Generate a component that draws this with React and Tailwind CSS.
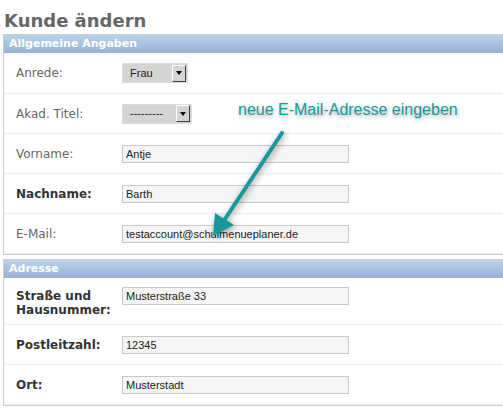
import React from 'react'

function Select({ value, width }) {
  return (
    <div
      className={`flex items-center justify-between h-[20px] bg-[#d4d4d4] border border-[#dcdcdc] pl-[7px] pr-px font-['Liberation_Sans',Arial,sans-serif] text-[11px] text-[#222] ${width}`}
    >
      <span>{value}</span>
      <span className="flex items-center justify-center w-[14px] h-[17px] bg-[#d4d4d4] border-t border-l border-t-white border-l-white border-r border-b border-r-[#404040] border-b-[#404040]">
        <svg width="6" height="4" viewBox="0 0 6 4">
          <path d="M0 0h6L3 4z" fill="#000" />
        </svg>
      </span>
    </div>
  )
}

function Input({ value }) {
  return (
    <div className="w-[227px] h-[18px] bg-[#f5f5f5] border border-[#c8c8c8] pl-[3px] font-['Liberation_Sans',Arial,sans-serif] text-[11px] leading-[16px] text-[#222]">
      {value}
    </div>
  )
}

function Row({ label, bold, h = 'h-[40px]', children }) {
  return (
    <div className={`flex items-center ${h} border-b border-[#eee] pl-[12px]`}>
      <label
        className={`w-[106px] text-[12px] ${bold ? 'font-bold text-[#333]' : 'text-[#666]'}`}
      >
        {label}
      </label>
      {children}
    </div>
  )
}

function Header({ children }) {
  return (
    <div className="h-[18px] bg-linear-to-b from-[#bdd2e8] to-[#93b3d6] pl-[5px] text-[11px] leading-[18px] font-bold text-white">
      {children}
    </div>
  )
}

export default function App() {
  return (
    <div className="relative w-[503px] h-[409px] overflow-hidden bg-white font-['DejaVu_Sans',Verdana,sans-serif]">
      <h1 className="h-[34px] pl-[4px] pt-[10px] text-[18px] leading-[21px] font-bold text-[#666]">
        Kunde ändern
      </h1>

      <div className="ml-[3px] w-[540px] border border-[#ccc]">
        <Header>Allgemeine Angaben</Header>
        <Row label="Anrede:" h="h-[41px]">
          <Select value="Frau" width="w-[66px]" />
        </Row>
        <Row label="Akad. Titel:">
          <Select value="---------" width="w-[70px]" />
        </Row>
        <Row label="Vorname:">
          <Input value="Antje" />
        </Row>
        <Row label="Nachname:" bold>
          <Input value="Barth" />
        </Row>
        <Row label="E-Mail:">
          <Input value="testaccount@schulmenueplaner.de" />
        </Row>
      </div>

      <div className="mt-[4px] ml-[3px] w-[540px] border border-[#ccc]">
        <Header>Adresse</Header>
        <div className="flex items-start h-[47px] border-b border-[#eee] pl-[12px] pt-[9px]">
          <label className="w-[106px] mt-[2px] text-[12px] leading-[14px] font-bold text-[#333]">
            Straße und Hausnummer:
          </label>
          <Input value="Musterstraße 33" />
        </div>
        <Row label="Postleitzahl:" bold>
          <Input value="12345" />
        </Row>
        <Row label="Ort:" bold>
          <Input value="Musterstadt" />
        </Row>
      </div>

      <div className="absolute left-[238px] top-[101px] font-['Liberation_Sans',Arial,sans-serif] text-[16px] leading-[18px] text-[#17999b] [text-shadow:1px_2px_4px_rgba(0,0,0,0.35)]">
        neue E-Mail-Adresse eingeben
      </div>

      <svg
        className="absolute inset-0 pointer-events-none drop-shadow-[1px_2px_3px_rgba(0,0,0,0.4)]"
        width="503"
        height="409"
      >
        <line x1="282" y1="133" x2="223" y2="222" stroke="#17999b" strokeWidth="4" strokeLinecap="round" />
        <polygon points="213,236 215,213 234,225" fill="#17999b" />
      </svg>
    </div>
  )
}
